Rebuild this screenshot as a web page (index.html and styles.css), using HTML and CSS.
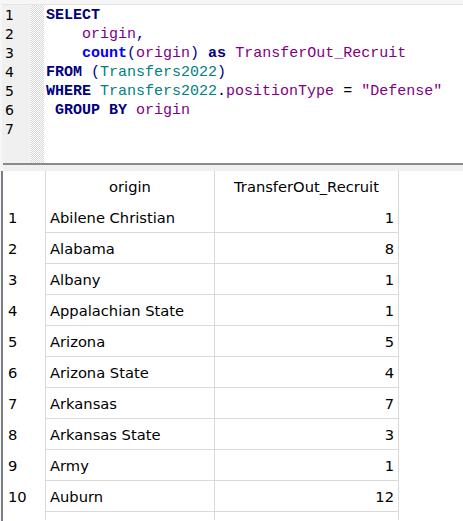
FILE: index.html
```html
<!DOCTYPE html>
<html>
<head>
<meta charset="utf-8">
<link rel="stylesheet" href="styles.css">
</head>
<body>
<div class="editor">
  <div class="gutter">
    <div>1</div><div>2</div><div>3</div><div>4</div><div>5</div><div>6</div><div>7</div>
  </div>
  <div class="hatch"></div>
  <pre class="code"><span class="kw">SELECT</span>
    <span class="id">origin</span><span class="op">,</span>
    <span class="fn">count</span><span class="op">(</span><span class="id">origin</span><span class="op">)</span> <span class="kw">as</span> <span class="id">TransferOut_Recruit</span>
<span class="kw">FROM</span> <span class="op">(</span><span class="tb">Transfers2022</span><span class="op">)</span>
<span class="kw">WHERE</span> <span class="tb">Transfers2022</span><span class="pl">.</span><span class="id">positionType</span> <span class="pl">=</span> <span class="id">"Defense"</span>
 <span class="kw">GROUP BY</span> <span class="id">origin</span>
</pre>
</div>
<div class="splitter"></div>
<div class="results">
  <table class="grid">
    <thead>
      <tr><th class="rn"></th><th class="c1">origin</th><th class="c2">TransferOut_Recruit</th></tr>
    </thead>
    <tbody>
      <tr><td class="rn">1</td><td class="c1">Abilene Christian</td><td class="c2 num">1</td></tr>
      <tr><td class="rn">2</td><td class="c1">Alabama</td><td class="c2 num">8</td></tr>
      <tr><td class="rn">3</td><td class="c1">Albany</td><td class="c2 num">1</td></tr>
      <tr><td class="rn">4</td><td class="c1">Appalachian State</td><td class="c2 num">1</td></tr>
      <tr><td class="rn">5</td><td class="c1">Arizona</td><td class="c2 num">5</td></tr>
      <tr><td class="rn">6</td><td class="c1">Arizona State</td><td class="c2 num">4</td></tr>
      <tr><td class="rn">7</td><td class="c1">Arkansas</td><td class="c2 num">7</td></tr>
      <tr><td class="rn">8</td><td class="c1">Arkansas State</td><td class="c2 num">3</td></tr>
      <tr><td class="rn">9</td><td class="c1">Army</td><td class="c2 num">1</td></tr>
      <tr><td class="rn">10</td><td class="c1">Auburn</td><td class="c2 num">12</td></tr>
      <tr class="stub"><td class="rn"></td><td class="c1"></td><td class="c2"></td></tr>
    </tbody>
  </table>
</div>
</body>
</html>
```
FILE: styles.css
```css
html, body {
  margin: 0;
  padding: 0;
}
body {
  width: 463px;
  height: 521px;
  overflow: hidden;
  background: #f6f6f6;
  font-family: "DejaVu Sans", Verdana, sans-serif;
}
.editor {
  margin-top: 4px;
  margin-left: 2px;
  border-top: 1px solid #e4e4e4;
  height: 158px;
  display: flex;
  background: #ffffff;
}
.gutter {
  width: 29px;
  background: #f0f0f0;
  font-size: 14px;
  line-height: 19px;
  color: #000;
  padding-left: 3px;
  padding-top: 1px;
  box-sizing: border-box;
}
.hatch {
  width: 13px;
  background: repeating-conic-gradient(#d6d6d6 0 25%, #ffffff 0 50%) 0 0 / 2px 2px;
}
.code {
  margin: 0;
  padding-left: 2px;
  padding-top: 1px;
  font-family: "Liberation Mono", "Courier New", monospace;
  font-size: 15px;
  line-height: 19px;
  color: #000;
}
.kw { color: #000080; font-weight: bold; }
.fn { color: #0000ff; font-weight: bold; }
.id { color: #800080; }
.tb { color: #008080; }
.op { color: #000080; }
.pl { color: #000; }
.splitter {
  margin-left: 3px;
  height: 6px;
  border-top: 2px solid #8a8a8a;
  background: #f0f0f0;
}
.results {
  margin-left: 1px;
  border-left: 2px solid #7a7f86;
  background: #ffffff;
  height: 350px;
  overflow: hidden;
}
.grid {
  border-collapse: collapse;
  font-size: 14.7px;
  color: #000;
}
.grid th, .grid td {
  padding: 0 4px;
  white-space: nowrap;
}
.grid th {
  height: 31px;
  font-weight: normal;
  text-align: center;
  border-right: 1px solid #dadada;
}
.grid td {
  height: 29px;
  padding-top: 1px;
  border-right: 1px solid #dadada;
  border-bottom: 1px solid #dadada;
}
.grid td.rn {
  border-bottom: none;
}
.grid .stub td {
  height: 8px;
  padding: 0;
  border-bottom: none;
}
.rn {
  width: 34px;
  padding-left: 5px !important;
  padding-right: 3px !important;
  text-align: left;
}
.c1 { width: 160px; }
.c2 { width: 175px; }
.num { text-align: right; }
```
